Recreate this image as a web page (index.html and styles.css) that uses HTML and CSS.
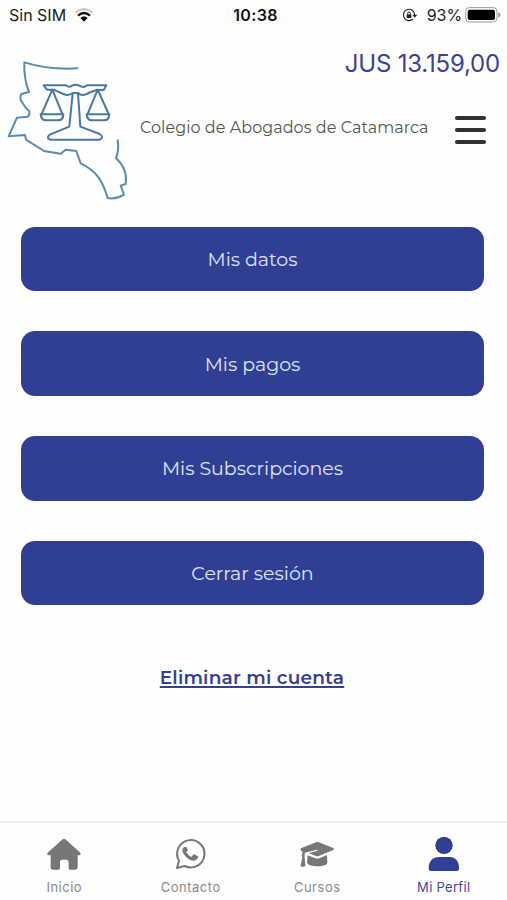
FILE: index.html
```html
<!DOCTYPE html>
<html lang="es">
<head>
<meta charset="utf-8">
<meta name="viewport" content="width=device-width, initial-scale=1">
<title>Mi Perfil</title>
<link rel="stylesheet" href="styles.css">
</head>
<body>
<div class="app">
  <div class="status">
    <div class="status-left">
      <span class="carrier">Sin SIM</span>
      <svg class="wifi" viewBox="0 0 60 42" fill="none">
        <path d="M4 15Q30-8 56 15" stroke="#c9c9c9" stroke-width="7"/>
        <path d="M12 23Q30 7 48 23" stroke="#111" stroke-width="7"/>
        <path d="M19 30Q30 20 41 30L30 41Z" fill="#111"/>
      </svg>
    </div>
    <span class="clock">10:38</span>
    <div class="status-right">
      <svg class="lock" viewBox="0 0 48 42" fill="none" stroke="#222" stroke-width="3.4">
        <path d="M33 33A17 17 0 1 1 38 21"/>
        <path d="M31 20H46L38.500 29Z" fill="#222" stroke="none"/>
        <path d="M14 19H28V30H14Z" fill="#222" stroke="none"/>
        <path d="M17 20V16a4 4 0 0 1 8 0V20" stroke-width="3"/>
      </svg>
      <span class="percent">93%</span>
      <svg class="battery" viewBox="0 0 108 48">
        <rect x="2" y="2" width="94" height="43" rx="12" fill="#fff" stroke="#999" stroke-width="3"/>
        <rect x="8" y="8" width="82" height="31" rx="6" fill="#000"/>
        <path d="M100 16Q107 19 107 24Q107 29 100 32Z" fill="#999"/>
      </svg>
    </div>
  </div>

  <header class="header">
    <svg class="logo" viewBox="0 0 420 480" fill="none" stroke="#5b8bae" stroke-width="6" stroke-linejoin="round" stroke-linecap="round">
      <path d="M232 55Q146 60 73 37Q71 87 87 126L64 132Q57 146 66 156Q75 173 88 184Q90 194 83 200L51 203L26 259L75 255L78 269L132 303L182 311L197 299L229 303L242 340C292 363 309 397 323 444Q348 449 372 434L362 407L377 402C382 373 370 345 348 324Q358 298 353 271"/>
      <g stroke="#4a78a5">
        <path d="M131 106H198Q208 114 216 107Q226 101 238 107Q250 115 261 106H319L311 120H290Q273 125 260 132Q245 139 234 129H219Q205 139 190 132L161 119H141Z"/>
        <path d="M157 119L125 192M157 119L187 192M293 119L263 192M293 119L326 192"/>
        <path d="M122 193H190Q189 211 175 211H138Q124 211 122 193ZM260 193H328Q326 211 313 211H276Q262 211 260 193Z"/>
        <path d="M218 130L208 230L151 253Q137 264 150 269H299Q314 262 299 252L241 230L234 130"/>
      </g>
    </svg>
    <h1 class="title">Colegio de Abogados de Catamarca</h1>
    <div class="header-side">
      <span class="jus">JUS 13.159,00</span>
      <button class="menu" aria-label="Menú"><i></i><i></i><i></i></button>
    </div>
  </header>

  <main class="main">
    <button class="action"><span>Mis datos</span></button>
    <button class="action"><span>Mis pagos</span></button>
    <button class="action"><span>Mis Subscripciones</span></button>
    <button class="action"><span>Cerrar sesión</span></button>
    <a class="delete" href="#">Eliminar mi cuenta</a>
  </main>

  <nav class="tabs">
    <a class="tab" href="#">
      <svg viewBox="0 0 108 108" fill="currentColor">
        <path d="M50 4Q54 0 58 4L103 44Q106 51 99 52H95V88Q95 95 88 95H72Q68 95 68 90V73Q68 65 61 65H49Q42 65 42 73V90Q42 95 37 95H20Q14 95 14 88V52H9Q1 51 5 44Z"/>
      </svg>
      <span>Inicio</span>
    </a>
    <a class="tab" href="#">
      <svg viewBox="0 0 108 108" fill="none" stroke="currentColor">
        <path d="M12 90L18 68A41 41 0 1 1 35 84Z" stroke-width="6" stroke-linejoin="round"/>
        <path d="M37 27Q33 26 30 31Q27 36 29 42C35 56 49 68 63 68C71 67 76 61 75 55L63 49Q61 49 55 57Q45 52 40 43L45 36L40 27Z" fill="currentColor" stroke="none"/>
      </svg>
      <span>Contacto</span>
    </a>
    <a class="tab" href="#">
      <svg viewBox="0 0 108 108" fill="currentColor">
        <path d="M51 13Q55 11 59 13L103 30Q107 33 103 36L59 54Q55 56 51 54L29 46L55 38Q58 36 54 35L18 44Q16 50 17 58L19 82Q19 86 15 86H8Q4 86 5 82L10 59Q6 53 10 48V41L5 37Q2 34 6 31Z"/>
        <path d="M26 52L49 61Q55 63 61 61L84 51L85 75C81 88 32 88 24 75Z"/>
      </svg>
      <span>Cursos</span>
    </a>
    <a class="tab active" href="#">
      <svg viewBox="0 0 108 108" fill="currentColor">
        <circle cx="54" cy="22" r="26"/>
        <path d="M8 91C8 70 20 57 39 57H70C89 57 99 70 99 91Q99 99 92 99H15Q8 99 8 91Z"/>
      </svg>
      <span>Mi Perfil</span>
    </a>
  </nav>
</div>
</body>
</html>
```
FILE: styles.css
```css
* { box-sizing: border-box; }
body { margin: 0; background: #fefefe; font-family: Inter, "Liberation Sans", sans-serif; }
button { border: 0; font: inherit; padding: 0; }
a { color: inherit; }
.app { width: 100%; height: 900px; display: flex; flex-direction: column; overflow: hidden; }

.status { height: 30px; display: grid; grid-template-columns: 1fr auto 1fr; align-items: center; padding: 0 7px 0 9px; font-size: 16px; line-height: 30px; color: #222; }
.status-left, .status-right { display: flex; align-items: center; }
.status-right { justify-content: flex-end; }
.wifi { width: 20px; height: 14px; margin-left: 8px; }
.clock { font-weight: 600; letter-spacing: 0.35px; color: #111; padding-left: 2px; }
.lock { width: 16px; height: 14px; margin-right: 9px; }
.percent { letter-spacing: -0.1px; }
.battery { width: 36px; height: 16px; margin-left: 3px; margin-right: -1px; }

.header { height: 180px; display: grid; grid-template-columns: 140px 180px 187px; }
.logo { width: 140px; height: 160px; margin-top: 20px; }
.title { margin: 88px 0 0; font-family: Montserrat, Inter, sans-serif; font-size: 16px; line-height: 20px; font-weight: 400; letter-spacing: 0.05px; color: #555; white-space: nowrap; }
.header-side { display: flex; flex-direction: column; align-items: flex-end; padding: 19px 7px 0 0; }
.jus { font-size: 24px; line-height: 30px; letter-spacing: -0.2px; color: #3b4293; white-space: nowrap; }
.menu { width: 31px; height: 28px; margin: 37px 14px 0 0; background: none; display: flex; flex-direction: column; justify-content: space-between; }
.menu i { height: 4px; border-radius: 2px; background: #303030; }

.main { flex: 1; padding: 16.500px 23px 0 21px; display: flex; flex-direction: column; align-items: center; }
.action { width: 100%; height: 64.500px; margin-bottom: 40.300px; padding-top: 1px; border-radius: 14px; background: #303f94; color: #dce3fb; font-family: Montserrat, Inter, sans-serif; font-size: 19px; letter-spacing: -0.02px; flex: none; }
.delete { font-family: Montserrat, Inter, sans-serif; font-size: 18.500px; font-weight: 600; line-height: 24px; margin: 20.500px 1px 0 0; color: #36408f; text-underline-offset: 2px; text-decoration-thickness: 1.500px; letter-spacing: 0.2px; }

.tabs { height: 79px; border-top: 2px solid #f0f0f0; display: grid; grid-template-columns: repeat(4, 1fr); padding-left: 1px; }
.tab { display: flex; flex-direction: column; align-items: center; color: #777; text-decoration: none; padding-top: 15px; }
.tab svg { width: 36px; height: 36px; overflow: visible; }
.tab span { font-size: 13px; line-height: 16px; margin-top: 5px; letter-spacing: 0.5px; color: #8a8a8a; }
.tab.active { color: #303f94; }
.tab.active span { color: #3f4999; letter-spacing: 0.3px; }
```
